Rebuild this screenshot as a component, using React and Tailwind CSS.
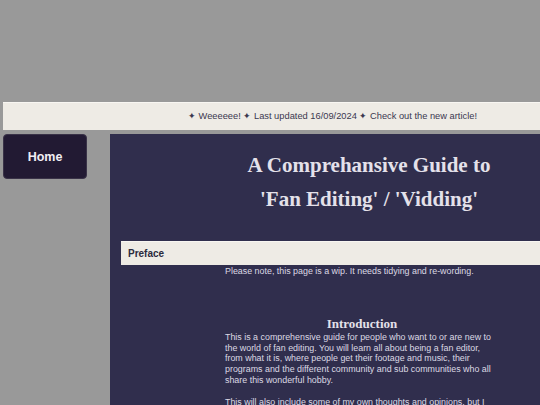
import React from "react";

const serif = { fontFamily: '"Liberation Serif", "Times New Roman", serif' };
const sans = { fontFamily: '"Liberation Sans", Arial, sans-serif' };

const App = () => {
    return (
        <div
            className="w-[540px] h-[405px] overflow-hidden bg-[#999999] pt-[102px]"
            style={sans}
        >
            {/* Ticker */}
            <div className="ml-[3px] w-[560px] h-[28px] bg-[#eeebe5] border-t border-[#f8f6f2] flex items-center pl-[185px] text-[9.3px] text-[#3b3850] whitespace-nowrap">
                ✦ Weeeeee! ✦ Last updated 16/09/2024 ✦ Check out the new article!
            </div>

            <div className="flex items-start mt-[4px]">
                {/* Nav */}
                <div className="ml-[3px] w-[84px] h-[45px] shrink-0 rounded-[4px] bg-[#221a33] border border-[#3a3348] flex justify-center pt-[14px] text-[12.5px] leading-[16px] font-bold text-[#f1eef4]">
                    Home
                </div>

                {/* Main */}
                <div className="ml-[23px] w-[518px] h-[300px] shrink-0 bg-[#302e4d] pt-[14px]">
                    <h1
                        className="text-center text-[21px] leading-[34px] font-bold text-[#e4e1ea]"
                        style={serif}
                    >
                        A Comprehansive Guide to
                        <br />
                        'Fan Editing' / 'Vidding'
                    </h1>

                    <div className="mt-[25px] ml-[11px] h-[24px] bg-[#eeebe5] border-t border-[#f8f6f2] flex items-center pl-[7px] text-[10px] font-bold text-[#2b2a3d]">
                        Preface
                    </div>

                    <div className="ml-[115px] w-[268px] text-[8.9px] leading-[10.8px] text-[#dcd9e4]">
                        <p className="mt-[1px]">
                            Please note, this page is a wip. It needs tidying and re-wording.
                        </p>

                        <h2
                            className="mt-[39px] pl-[6px] text-center text-[13px] leading-[16px] font-bold text-[#e4e1ea]"
                            style={serif}
                        >
                            Introduction
                        </h2>
                        <p>
                            This is a comprehensive guide for people who want to or are new to
                            the world of fan editing. You will learn all about being a fan editor,
                            from what it is, where people get their footage and music, their
                            programs and the different community and sub communities who all
                            share this wonderful hobby.
                        </p>
                        <p className="mt-[11px]">
                            This will also include some of my own thoughts and opinions, but I
                            will try to keep it as neutral as possible.
                        </p>
                    </div>
                </div>
            </div>
        </div>
    );
};

export default App;
